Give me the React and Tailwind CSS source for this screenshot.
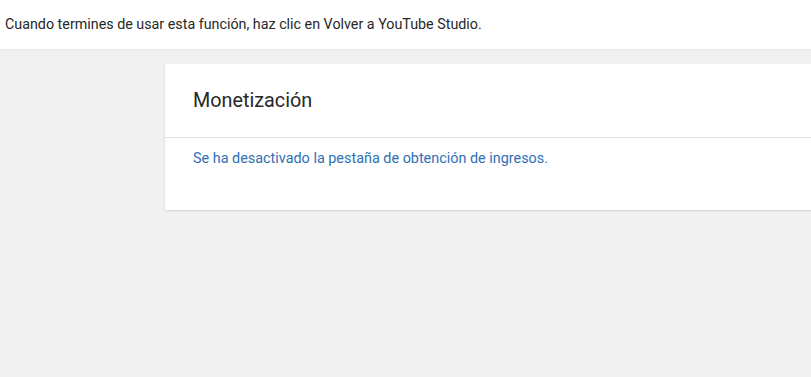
export default function App() {
  return (
    <div className="w-[811px] h-[377px] overflow-hidden bg-[#f1f1f1] font-['Roboto',sans-serif]">
      <div className="h-[50px] bg-white border-b border-[#e6e6e6] flex items-center pl-[5px]">
        <span className="text-[14.3px] text-[#282828]">Cuando termines de usar esta función, haz clic en Volver a YouTube Studio.</span>
      </div>
      <div className="pl-[165px] pt-[14px]">
        <div className="bg-white w-[700px] shadow-[0_1px_2px_rgba(0,0,0,0.15)]">
          <div className="h-[74px] flex items-center pl-[28px] border-b border-[#e0e0e0]">
            <span className="text-[19.8px] leading-[24px] text-[#282828]">Monetización</span>
          </div>
          <div className="h-[72px] pl-[28px] pt-[8px]">
            <span className="text-[14.4px] leading-[20px] text-[#3070b6]">Se ha desactivado la pestaña de obtención de ingresos.</span>
          </div>
        </div>
      </div>
    </div>
  );
}
